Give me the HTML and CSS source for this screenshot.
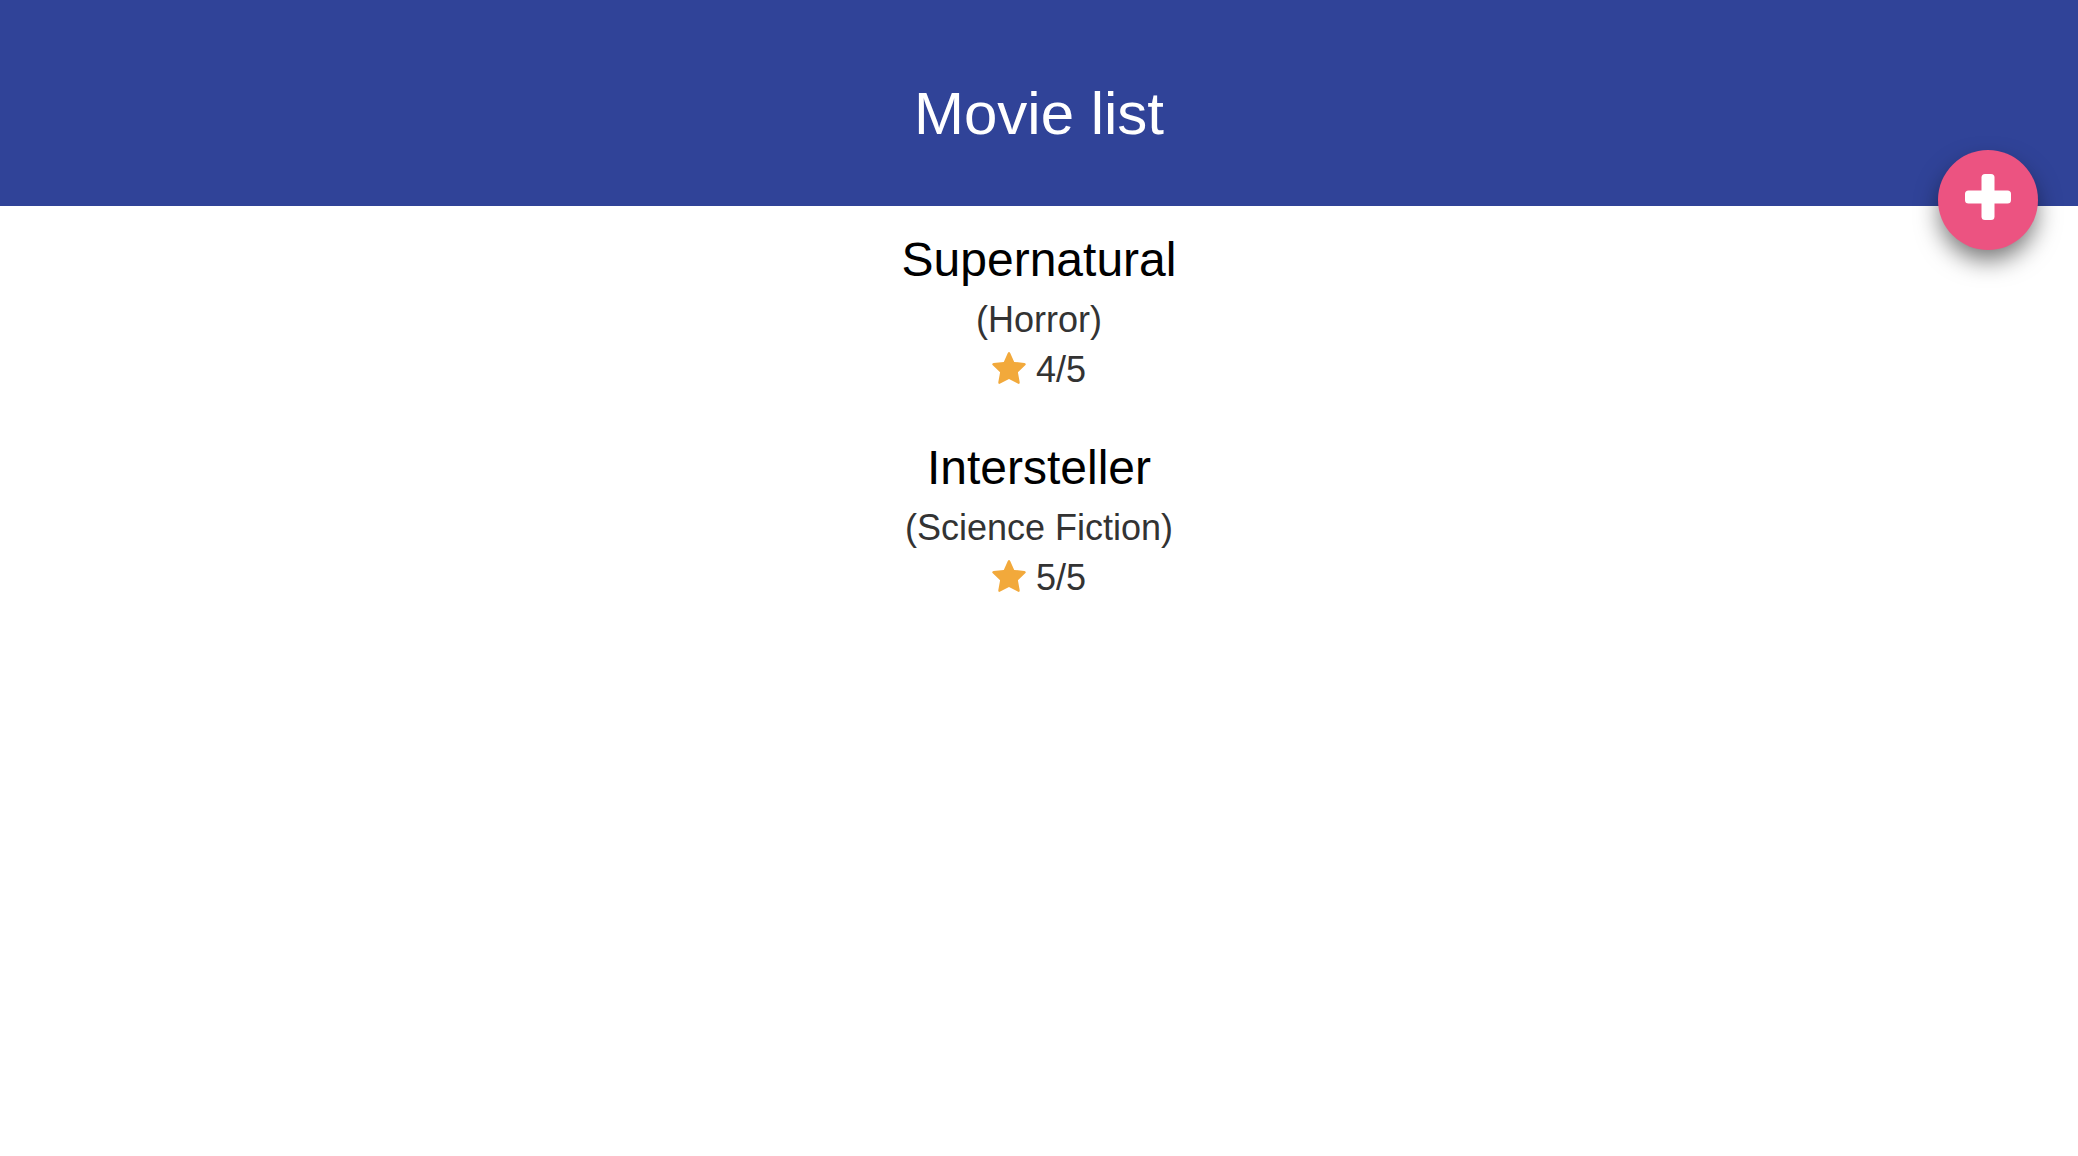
FILE: index.html
```
<!DOCTYPE html>
<html lang="en">
<head>
  <meta charset="utf-8">
  <meta name="viewport" content="width=device-width, initial-scale=1">
  <title>Movie list</title>
  <link rel="stylesheet" href="styles.css">
</head>
<body>
  <svg class="sprite" aria-hidden="true">
    <symbol id="star" viewBox="0 0 34 32">
      <path d="M15.800 1.100Q17 -1 18.200 1.100L22.200 9.900L32.400 11.100Q34.700 11.600 33.200 13.300L25.900 20.300L27.700 30.200Q27.900 32.600 25.800 31.600L17 26.900L8.200 31.600Q6.100 32.600 6.300 30.200L8.100 20.300L0.800 13.300Q-0.700 11.600 1.600 11.100L11.800 9.900Z"/>
    </symbol>
  </svg>

  <header class="header">
    <h1 class="header-title">Movie list</h1>
    <button class="add-button" type="button" aria-label="Add movie">
      <svg class="add-icon" viewBox="0 0 46 46" aria-hidden="true">
        <rect x="16.500" y="0" width="13" height="46" rx="3.500"/>
        <rect x="0" y="16.500" width="46" height="13" rx="3.500"/>
      </svg>
    </button>
  </header>

  <main class="movies">
    <article class="movie">
      <h2 class="movie-title">Supernatural</h2>
      <p class="movie-genre">(Horror)</p>
      <p class="movie-rating"><svg class="star-icon" aria-hidden="true"><use href="#star"/></svg>4/5</p>
    </article>
    <article class="movie">
      <h2 class="movie-title">Intersteller</h2>
      <p class="movie-genre">(Science Fiction)</p>
      <p class="movie-rating"><svg class="star-icon" aria-hidden="true"><use href="#star"/></svg>5/5</p>
    </article>
  </main>
</body>
</html>
```
FILE: styles.css
```
* {
  box-sizing: border-box;
}

body {
  margin: 0;
  background: #fff;
  color: #333;
  font-family: "Helvetica Neue", Helvetica, "Liberation Sans", Arial, sans-serif;
  font-size: 36px;
  line-height: 50px;
}

h1,
h2,
p {
  margin: 0;
  font-weight: 400;
}

.sprite {
  position: absolute;
  width: 0;
  height: 0;
}

.header {
  position: relative;
  padding: 80px 40px 58px;
  background: #304398;
  color: #fff;
  text-align: center;
}

.header-title {
  font-size: 60px;
  line-height: 68px;
}

.add-button {
  position: absolute;
  right: 40px;
  bottom: -44px;
  display: flex;
  align-items: center;
  justify-content: center;
  width: 100px;
  height: 100px;
  padding: 0 0 6px;
  border: 0;
  border-radius: 50%;
  background: #ec5381;
  box-shadow: 0 12px 24px -2px rgba(0, 0, 0, 0.55);
  cursor: pointer;
}

.add-icon {
  width: 46px;
  height: 46px;
  fill: #fff;
}

.movies {
  display: flex;
  flex-direction: column;
  gap: 46px;
  padding: 27px 40px;
  text-align: center;
}

.movie-title {
  margin-bottom: 8px;
  color: #000;
  font-size: 48px;
  line-height: 54px;
}

.movie-rating {
  display: flex;
  align-items: center;
  justify-content: center;
  gap: 10px;
}

.star-icon {
  width: 34px;
  height: 32px;
  margin-bottom: 4px;
  fill: #f2a93b;
}
```
